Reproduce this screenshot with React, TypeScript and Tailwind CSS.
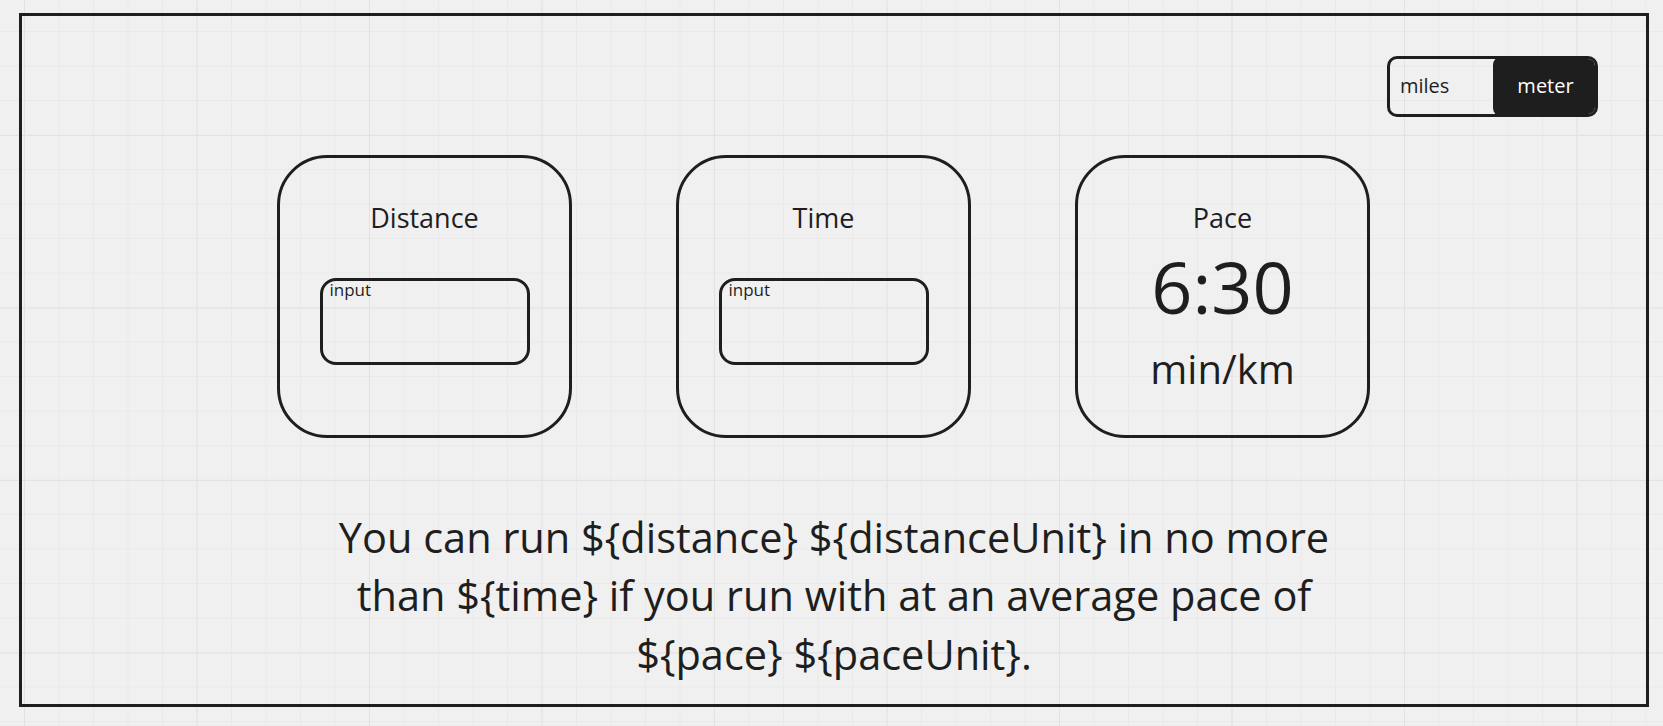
import React, { useState } from "react";

function InputCard({ title }: { title: string }) {
  return (
    <div className="w-[295px] h-[283px] rounded-[50px] border-[3px] border-[#1e1e1e] flex flex-col items-center pt-[41px]">
      <div className="text-[27px] leading-[37px]">{title}</div>
      <div className="mt-[42px] w-[210px] h-[87px] rounded-[16px] border-[3px] border-[#1e1e1e] pl-[7px] text-[17px] leading-none self-center text-left">
        <span className="block w-full">input</span>
      </div>
    </div>
  );
}

export default function App() {
  const [unit, setUnit] = useState<"miles" | "meter">("meter");

  return (
    <div
      className="w-full min-h-screen h-[726px] bg-[#f0f0f0] bg-[image:linear-gradient(to_right,#e2e2e2_1px,transparent_1px),linear-gradient(to_bottom,#e2e2e2_1px,transparent_1px),linear-gradient(to_right,#e9e9e9_1px,transparent_1px),linear-gradient(to_bottom,#e9e9e9_1px,transparent_1px)] bg-[size:172.5px_172.5px,172.5px_172.5px,34.5px_34.5px,34.5px_34.5px] bg-[position:24px_0,0_135px,24px_0,0_31px] pt-[13px] pl-[19px] text-[#1e1e1e]"
      style={{ fontFamily: '"Open Sans", "Noto Sans", sans-serif' }}
    >
      <div className="w-[1630px] h-[694px] border-[3px] border-[#1e1e1e] flex flex-col">
        {/* unit toggle */}
        <div className="flex justify-end pt-[40px] pr-[48px]">
          <div className="w-[211px] h-[61px] rounded-[10px] border-[3px] border-[#1e1e1e] flex text-[20px] overflow-hidden">
            <button
              onClick={() => setUnit("miles")}
              className={
                unit === "miles"
                  ? "flex-1 flex items-center justify-center bg-[#1e1e1e] text-white rounded-[8px] -m-[3px]"
                  : "flex-1 flex items-center pl-[10px] pb-[2px] cursor-pointer"
              }
            >
              miles
            </button>
            <button
              onClick={() => setUnit("meter")}
              className={
                unit === "meter"
                  ? "w-[105px] flex items-center justify-center pb-[2px] bg-[#1e1e1e] text-white rounded-[9px] -my-[3px] -mr-[3px] cursor-pointer"
                  : "w-[105px] flex items-center justify-center cursor-pointer"
              }
            >
              meter
            </button>
          </div>
        </div>

        {/* cards */}
        <div className="flex gap-[104px] pl-[255px] mt-[38px]">
          <InputCard title="Distance" />
          <InputCard title="Time" />
          <div className="w-[295px] h-[283px] rounded-[50px] border-[3px] border-[#1e1e1e] flex flex-col items-center pt-[41px]">
            <div className="text-[27px] leading-[37px]">Pace</div>
            <div className="mt-[14px] text-[72px] leading-[72px]">6:30</div>
            <div className="mt-[27px] text-[40px] leading-[40px]">
              min/{unit === "meter" ? "km" : "mi"}
            </div>
          </div>
        </div>

        {/* summary */}
        <p className="mt-[70px] text-center text-[41.5px] leading-[58.3px]">
          You can run ${"{distance}"} ${"{distanceUnit}"} in no more
          <br />
          than ${"{time}"} if you run with at an average pace of
          <br />
          ${"{pace}"} ${"{paceUnit}"}.
        </p>
      </div>
    </div>
  );
}
